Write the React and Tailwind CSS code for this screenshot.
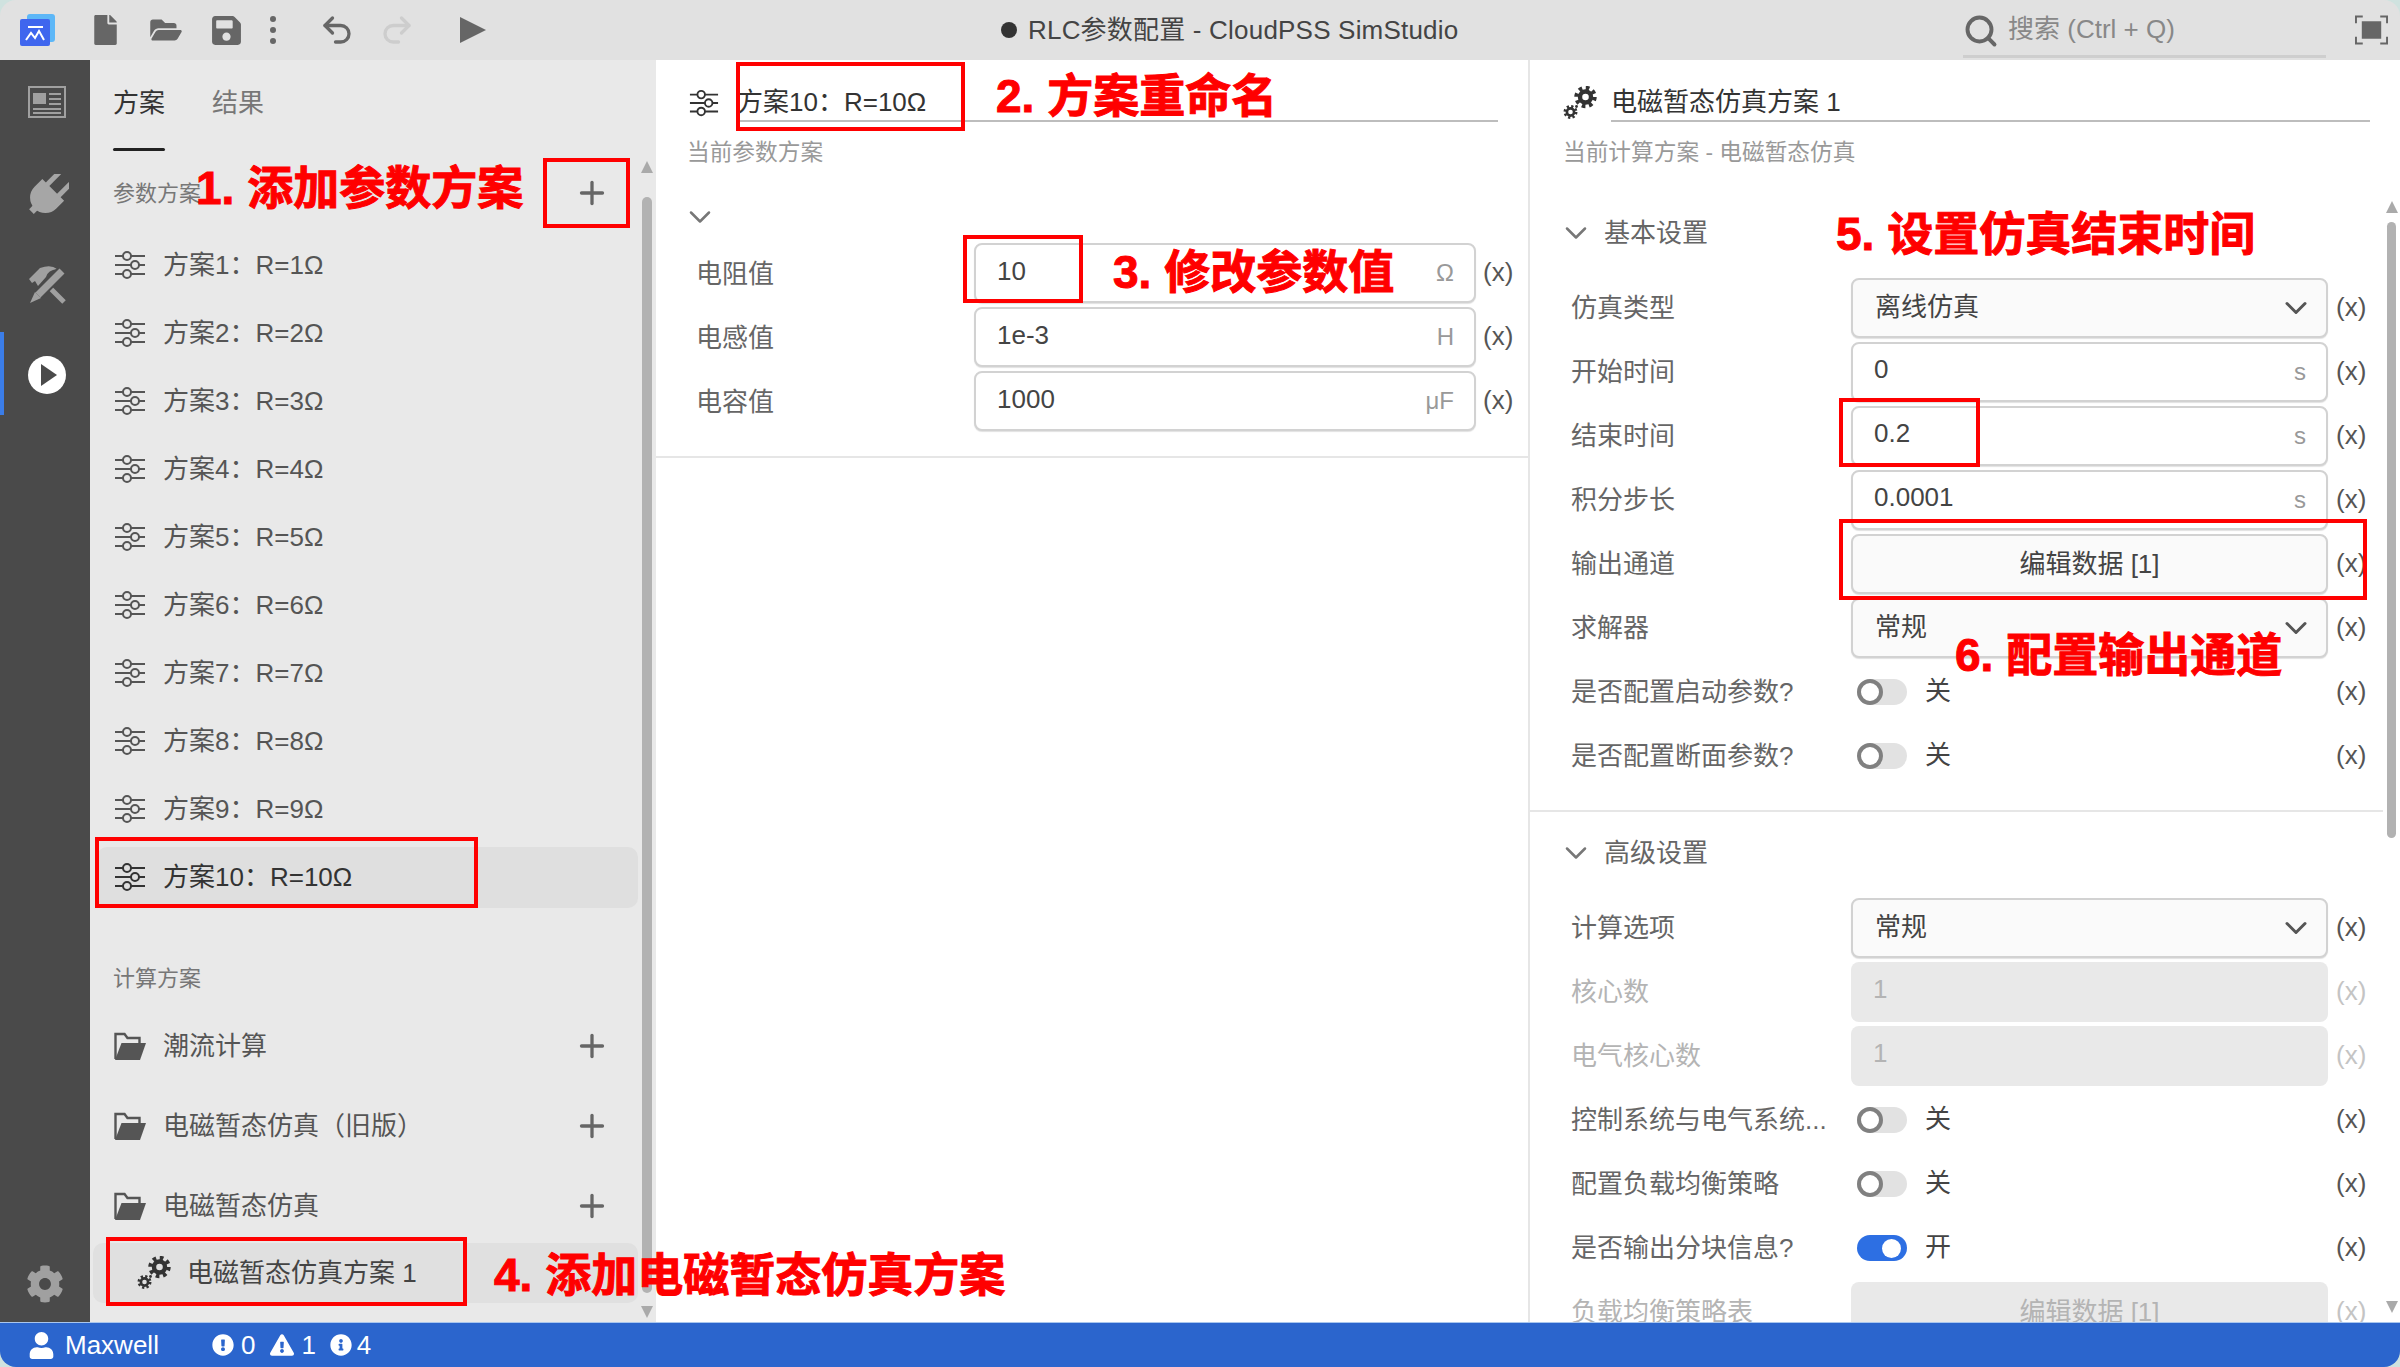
import React from 'react';
import { ChevronDown, Plus, Undo2, Redo2, Search } from 'lucide-react';
import { FaCog, FaUser, FaFile, FaFolderOpen, FaSave, FaExclamationCircle, FaExclamationTriangle, FaInfoCircle } from 'react-icons/fa';

// ── Icons ─────────────────────────────────────────────────────────────────────
const Sliders = ({ className = 'w-[32px] h-[28px] text-[#555]' }) => (
    <svg viewBox="0 0 32 28" className={className} fill="none" stroke="currentColor" strokeWidth="2">
        <path d="M1 5H9M17 5H31" />
        <circle cx="13" cy="5" r="4" />
        <path d="M1 14H17M25 14H31" />
        <circle cx="21" cy="14" r="4" />
        <path d="M1 23H9M17 23H31" />
        <circle cx="13" cy="23" r="4" />
    </svg>
);

const Gear = ({ cx, cy, r, w }) => (
    <g fill="none" stroke="currentColor">
        <circle cx={cx} cy={cy} r={r} strokeWidth={w} />
        <circle cx={cx} cy={cy} r={r + w * 0.8} strokeWidth={w} strokeDasharray={`${(2 * Math.PI * (r + w * 0.8)) / 16} ${(2 * Math.PI * (r + w * 0.8)) / 16}`} />
    </g>
);

const Gears = ({ className = 'w-[34px] h-[34px] text-[#333]' }) => (
    <svg viewBox="0 0 34 34" className={className}>
        <Gear cx={22.5} cy={11} r={5.5} w={4.4} />
        <Gear cx={7.5} cy={26} r={3.6} w={2.6} />
        <circle cx="13.5" cy="20.5" r="1.4" fill="currentColor" />
    </svg>
);

const FolderIcon = () => (
    <svg viewBox="0 0 32 30" className="w-[32px] h-[30px] text-[#555] shrink-0">
        <path d="M1.5 28V3h9l3 4h12v5" fill="none" stroke="currentColor" strokeWidth="2.4" />
        <path d="M1 29L7.5 12H32L26 29Z" fill="currentColor" />
    </svg>
);

const Logo = () => (
    <svg viewBox="0 0 35 32" className="w-[35px] h-[32px]">
        <rect x="7" y="0" width="28" height="28" rx="3" fill="#5db7f7" />
        <rect x="0" y="5" width="30" height="27" rx="2" fill="#3f66ee" />
        <path d="M8 13H23M6 26L11 19L15 24L19 17L24 26" fill="none" stroke="#fff" strokeWidth="2" />
    </svg>
);

const NewsIcon = () => (
    <svg viewBox="0 0 38 32" className="w-[38px] h-[32px] text-[#a0a0a0]">
        <rect x="1" y="1" width="36" height="30" fill="none" stroke="currentColor" strokeWidth="2" />
        <rect x="5" y="7" width="13" height="11" fill="currentColor" />
        <path d="M21 8H33M21 13H33M21 18H33M5 23H33M5 27H33" stroke="currentColor" strokeWidth="2" />
    </svg>
);

const PlugIcon = () => (
    <svg viewBox="0 0 40 40" className="w-[44px] h-[44px] mt-[5px] text-[#a6a6a6]">
        <g transform="rotate(45 20 20)" fill="currentColor">
            <rect x="10.5" y="-3" width="4.5" height="16" />
            <rect x="25" y="-3" width="4.5" height="16" />
            <path d="M6 12H34V22A14 14 0 0 1 6 22Z" />
            <rect x="17" y="32" width="6" height="8" />
        </g>
    </svg>
);

const ToolsIcon = () => (
    <svg viewBox="0 0 40 40" className="w-[40px] h-[40px] mt-[2px] text-[#a0a0a0]">
        <path d="M19 19L37 37" stroke="currentColor" strokeWidth="5" />
        <path d="M2 14L13 3Q24 -1 30 4Q21 5 19 12L11 21L8 16L5 18Z" fill="currentColor" />
        <path d="M35 6L11 30" stroke="#4a4a4a" strokeWidth="11" />
        <path d="M35 6L11 30" stroke="currentColor" strokeWidth="7" />
        <path d="M8 27L14 33L3 38Z" fill="currentColor" />
    </svg>
);

const PlayCircle = () => (
    <svg viewBox="0 0 38 38" className="w-[38px] h-[38px]">
        <circle cx="19" cy="19" r="19" fill="#fff" />
        <path d="M13 8L29 19L13 30Z" fill="#4a4a4a" />
    </svg>
);

const FullscreenIcon = () => (
    <svg viewBox="0 0 34 30" className="w-[33px] h-[30px] text-[#666]">
        <path d="M1 8V1H8M26 1H33V8M1 22V29H8M26 29H33V22" fill="none" stroke="currentColor" strokeWidth="2" />
        <rect x="7" y="6" width="20" height="18" fill="currentColor" />
    </svg>
);

const Arrow = ({ up, className }) => (
    <svg viewBox="0 0 12 12" className={`absolute w-[14px] h-[12px] text-[#aaa] ${className}`}>
        <path d={up ? 'M6 0L12 12H0Z' : 'M6 12L12 0H0Z'} fill="currentColor" />
    </svg>
);

const AddIcon = () => <Plus className="w-[36px] h-[36px] shrink-0 text-[#666]" strokeWidth={2.2} />;

// ── Left panel ────────────────────────────────────────────────────────────────
const PlanRow = ({ name, selected }) => (
    <div className="h-[68px] flex items-center">
        <div className={`ml-[7px] w-[541px] h-[61px] pl-[17px] flex items-center gap-[17px] rounded-[10px] text-[26px] ${selected ? 'bg-[#dfdfdf] text-[#333]' : 'text-[#555]'}`}>
            <Sliders className={`w-[32px] h-[28px] ${selected ? 'text-[#333]' : 'text-[#555]'}`} />
            <span>{name}</span>
        </div>
    </div>
);

const FolderRow = ({ name }) => (
    <div className="h-[80px] pl-[24px] pr-[46px] flex items-center gap-[17px] text-[26px] text-[#555]">
        <FolderIcon />
        <span className="grow">{name}</span>
        <AddIcon />
    </div>
);

const LeftPanel = () => (
    <div className="w-[566px] shrink-0 bg-[#e9e9e9] relative overflow-hidden">
        <div className="pt-[28px] pl-[23px] flex gap-[47px] text-[26px] leading-[30px]">
            <div className="text-[#333]">
                方案
                <div className="mt-[30px] h-[3px] rounded-full bg-[#222]" />
            </div>
            <div className="text-[#777]">结果</div>
        </div>
        <div className="mt-[27px] pl-[23px] pr-[46px] h-[30px] flex items-center justify-between text-[22px] text-[#777]">
            <span>参数方案</span>
            <AddIcon />
        </div>
        <div className="mt-[23px]">
            {[1, 2, 3, 4, 5, 6, 7, 8, 9].map(n => <PlanRow key={n} name={`方案${n}：R=${n}Ω`} />)}
            <PlanRow name="方案10：R=10Ω" selected />
        </div>
        <div className="mt-[53px] pl-[23px] h-[30px] leading-[30px] text-[22px] text-[#777]">计算方案</div>
        <div className="mt-[12px]">
            <FolderRow name="潮流计算" />
            <FolderRow name="电磁暂态仿真（旧版）" />
            <FolderRow name="电磁暂态仿真" />
        </div>
        <div className="-mt-[3px] ml-[3px] w-[545px] h-[60px] pl-[44px] flex items-center gap-[16px] rounded-[10px] bg-[#e0e0e0] text-[26px] text-[#444]">
            <Gears />
            <span>电磁暂态仿真方案 1</span>
        </div>
        {/* scrollbar */}
        <Arrow up className="left-[550px] top-[101px]" />
        <div className="absolute left-[552px] top-[137px] w-[10px] h-[1096px] rounded-full bg-[#b2b2b2]" />
        <Arrow className="left-[550px] top-[1246px]" />
    </div>
);

// ── Form fields ───────────────────────────────────────────────────────────────
const X = ({ disabled }) => (
    <span className={`block pb-[2px] text-[26px] ${disabled ? 'text-[#c4c4c4]' : 'text-[#555]'}`}>(x)</span>
);

const fieldBase = 'h-[60px] rounded-[8px] flex items-center text-[26px]';

const TextField = ({ value, unit, width, lift = 'pb-[6px]' }) => (
    <div className={`${fieldBase} ${width} border-2 border-[#d2d2d2] bg-white pl-[21px] pr-[20px] justify-between shadow-[0_1px_1px_rgba(0,0,0,0.12)]`}>
        <span className={`text-[#444] ${lift}`}>{value}</span>
        <span className="text-[#999] text-[24px]">{unit}</span>
    </div>
);

const SelectField = ({ value, width }) => (
    <div className={`${fieldBase} ${width} border-2 border-[#d2d2d2] bg-[#fafafa] pl-[22px] pr-[12px] justify-between text-[#444] shadow-[0_1px_1px_rgba(0,0,0,0.12)]`}>
        <span className="pb-[2px]">{value}</span>
        <ChevronDown className="w-[36px] h-[36px] text-[#555]" strokeWidth={2} />
    </div>
);

const ButtonField = ({ value, width, disabled }) => (
    <div className={`${fieldBase} ${width} justify-center ${disabled ? 'bg-[#e9e9e9] text-[#b4b4b4]' : 'border-2 border-[#d2d2d2] bg-[#fafafa] text-[#444] shadow-[0_1px_1px_rgba(0,0,0,0.12)]'}`}>
        {value}
    </div>
);

const DisabledField = ({ value, width }) => (
    <div className={`${fieldBase} ${width} bg-[#e9e9e9] pl-[22px] text-[#b4b4b4]`}>
        <span className="pb-[6px]">{value}</span>
    </div>
);

const Toggle = ({ on, width }) => (
    <div className={`${width} h-[60px] pl-[6px] flex items-center gap-[18px] text-[26px] text-[#444]`}>
        {on ? (
            <div className="w-[50px] h-[26px] rounded-full bg-[#2d6fe3] flex items-center justify-end pr-[6px]">
                <div className="w-[19px] h-[19px] rounded-full bg-white" />
            </div>
        ) : (
            <div className="w-[50px] h-[26px] rounded-full bg-[#e2e2e2]">
                <div className="w-[26px] h-[26px] rounded-full bg-white border-4 border-[#808080]" />
            </div>
        )}
        <span className="pb-[2px]">{on ? '开' : '关'}</span>
    </div>
);

const Row = ({ label, disabled, children }) => (
    <div className="h-[60px] flex items-center pl-[41px]">
        <div className={`w-[280px] text-[26px] ${disabled ? 'text-[#b4b4b4]' : 'text-[#666]'}`}>{label}</div>
        {children}
        <div className="ml-[8px]"><X disabled={disabled} /></div>
    </div>
);

const W = 'w-[477px]';

// ── Middle panel ──────────────────────────────────────────────────────────────
const MiddlePanel = () => (
    <div className="w-[874px] shrink-0 bg-white border-r-2 border-[#e6e6e6]">
        <div className="flex items-center">
            <div className="pl-[33px] pt-[24px] w-[81px]"><Sliders className="w-[30px] h-[28px] text-[#333]" /></div>
            <div className="grow mr-[30px] h-[62px] pt-[24px] flex items-center border-b-2 border-[#bdbdbd] text-[26px] text-[#333]">方案10：R=10Ω</div>
        </div>
        <div className="mt-[15px] pl-[31px] h-[30px] leading-[30px] text-[22.7px] text-[#999]">当前参数方案</div>
        <div className="border-b-2 border-[#e6e6e6] pb-[25px]">
            <ChevronDown className="mt-[32px] ml-[26px] w-[36px] h-[36px] text-[#777]" strokeWidth={1.7} />
            <div className="mt-[8px] flex flex-col gap-[4px]">
                {[['电阻值', '10', 'Ω'], ['电感值', '1e-3', 'H'], ['电容值', '1000', 'μF']].map(([label, value, unit]) => (
                    <div key={label} className="h-[60px] flex items-center pl-[40px]">
                        <div className="w-[278px] pt-[2px] text-[26px] text-[#666]">{label}</div>
                        <TextField value={value} unit={unit} width="w-[502px]" lift="pb-[4px]" />
                        <div className="ml-[7px]"><X /></div>
                    </div>
                ))}
            </div>
        </div>
    </div>
);

// ── Right panel ───────────────────────────────────────────────────────────────
const SectionTitle = ({ title }) => (
    <div className="h-[40px] pl-[28px] flex items-center gap-[10px] text-[26px] text-[#666]">
        <ChevronDown className="w-[36px] h-[36px] text-[#777]" strokeWidth={1.7} />
        <span>{title}</span>
    </div>
);

const RightPanel = () => (
    <div className="grow bg-white relative overflow-hidden">
        <div className="flex items-center">
            <div className="pl-[33px] pt-[24px] w-[81px]"><Gears className="w-[34px] h-[34px] text-[#333]" /></div>
            <div className="grow mr-[30px] h-[62px] pt-[24px] flex items-center border-b-2 border-[#bdbdbd] text-[26px] text-[#333]">电磁暂态仿真方案 1</div>
        </div>
        <div className="mt-[15px] pl-[33px] h-[30px] leading-[30px] text-[22.7px] text-[#999]">当前计算方案 - 电磁暂态仿真</div>

        <div className="mt-[46px] w-[853px] border-b-2 border-[#e6e6e6] pb-[24px]">
            <SectionTitle title="基本设置" />
            <div className="mt-[25px] flex flex-col gap-[4px]">
                <Row label="仿真类型"><SelectField value="离线仿真" width={W} /></Row>
                <Row label="开始时间"><TextField value="0" unit="s" width={W} /></Row>
                <Row label="结束时间"><TextField value="0.2" unit="s" width={W} /></Row>
                <Row label="积分步长"><TextField value="0.0001" unit="s" width={W} /></Row>
                <Row label="输出通道"><ButtonField value="编辑数据 [1]" width={W} /></Row>
                <Row label="求解器"><SelectField value="常规" width={W} /></Row>
                <Row label="是否配置启动参数?"><Toggle width={W} /></Row>
                <Row label="是否配置断面参数?"><Toggle width={W} /></Row>
            </div>
        </div>

        <div className="mt-[21px]">
            <SectionTitle title="高级设置" />
            <div className="mt-[25px] flex flex-col gap-[4px]">
                <Row label="计算选项"><SelectField value="常规" width={W} /></Row>
                <Row label="核心数" disabled><DisabledField value="1" width={W} /></Row>
                <Row label="电气核心数" disabled><DisabledField value="1" width={W} /></Row>
                <Row label="控制系统与电气系统..."><Toggle width={W} /></Row>
                <Row label="配置负载均衡策略"><Toggle width={W} /></Row>
                <Row label="是否输出分块信息?"><Toggle on width={W} /></Row>
                <Row label="负载均衡策略表" disabled><ButtonField value="编辑数据 [1]" width={W} disabled /></Row>
            </div>
        </div>

        {/* scrollbar */}
        <Arrow up className="left-[855px] top-[141px]" />
        <div className="absolute left-[857px] top-[162px] w-[9px] h-[616px] rounded-full bg-[#b2b2b2]" />
        <Arrow className="left-[855px] top-[1241px]" />
    </div>
);

// ── Tutorial marks drawn over the screenshot ──────────────────────────────────
const RedBox = ({ className }) => <div className={`absolute border-4 border-[#f00] ${className}`} />;
const Note = ({ className, children }) => (
    <div className={`absolute h-[50px] leading-[50px] text-[46px] font-bold text-[#f00] [-webkit-text-stroke:1px_#f00] whitespace-nowrap ${className}`}>{children}</div>
);

const Marks = () => (
    <>
        <RedBox className="left-[543px] top-[158px] w-[87px] h-[70px]" />
        <RedBox className="left-[95px] top-[837px] w-[383px] h-[71px]" />
        <RedBox className="left-[106px] top-[1237px] w-[361px] h-[69px]" />
        <RedBox className="left-[736px] top-[62px] w-[229px] h-[69px]" />
        <RedBox className="left-[963px] top-[235px] w-[120px] h-[68px]" />
        <RedBox className="left-[1839px] top-[398px] w-[141px] h-[69px]" />
        <RedBox className="left-[1839px] top-[519px] w-[528px] h-[81px]" />
        <Note className="left-[196px] top-[163px]">1. 添加参数方案</Note>
        <Note className="left-[996px] top-[71px]">2. 方案重命名</Note>
        <Note className="left-[1113px] top-[247px]">3. 修改参数值</Note>
        <Note className="left-[494px] top-[1250px]">4. 添加电磁暂态仿真方案</Note>
        <Note className="left-[1836px] top-[209px]">5. 设置仿真结束时间</Note>
        <Note className="left-[1955px] top-[630px]">6. 配置输出通道</Note>
    </>
);

const App = () => {
    return (
        <div className="w-[2400px] h-[1367px] bg-[#cfe2df]">
            <div className="relative w-full h-full rounded-[16px] overflow-hidden flex flex-col font-[family-name:'Liberation_Sans','Noto_Sans_CJK_SC',sans-serif]">
                {/* Title bar */}
                <div className="h-[60px] shrink-0 bg-[#e1e1e1] flex items-center">
                    <div className="ml-[20px]"><Logo /></div>
                    <FaFile className="ml-[39px] w-[23px] h-[30px] text-[#666]" />
                    <FaFolderOpen className="ml-[33px] w-[32px] h-[28px] text-[#666]" />
                    <FaSave className="ml-[30px] w-[29px] h-[33px] text-[#666]" />
                    <div className="ml-[29px] w-[8px] flex flex-col gap-[5px]">
                        <div className="w-[6px] h-[6px] rounded-full bg-[#666]" />
                        <div className="w-[6px] h-[6px] rounded-full bg-[#666]" />
                        <div className="w-[6px] h-[6px] rounded-full bg-[#666]" />
                    </div>
                    <Undo2 className="ml-[41px] w-[36px] h-[36px] text-[#666]" strokeWidth={2.2} />
                    <Redo2 className="ml-[24px] w-[36px] h-[36px] text-[#cdcdcd]" strokeWidth={2.2} />
                    <svg viewBox="0 0 26 26" className="ml-[45px] w-[26px] h-[26px] text-[#666]"><path d="M0 0L26 13L0 26Z" fill="currentColor" /></svg>
                    <div className="ml-[515px] w-[16px] h-[16px] rounded-full bg-[#333]" />
                    <div className="ml-[11px] text-[26px] text-[#444] tracking-[0.2px]">RLC参数配置 - CloudPSS SimStudio</div>
                    <div className="ml-auto w-[363px] h-[45px] mt-[10px] flex items-center gap-[9px] border-b-[3px] border-[#cecece] text-[26px] text-[#888]">
                        <Search className="w-[36px] h-[36px] mb-[6px] text-[#666]" strokeWidth={2.6} />
                        <span className="pb-[8px]">搜索 (Ctrl + Q)</span>
                    </div>
                    <div className="ml-[29px] mr-[12px]"><FullscreenIcon /></div>
                </div>

                {/* Workspace */}
                <div className="h-[1262px] flex overflow-hidden">
                    <div className="w-[90px] shrink-0 bg-[#4a4a4a] flex flex-col items-center pl-[4px] pt-[12px] gap-[31px]">
                        <div className="h-[60px] flex items-center"><NewsIcon /></div>
                        <div className="h-[60px] flex items-center"><PlugIcon /></div>
                        <div className="h-[60px] flex items-center"><ToolsIcon /></div>
                        <div className="relative w-full h-[60px] flex items-center justify-center">
                            <div className="absolute -left-[4px] top-[-13px] w-[4px] h-[83px] bg-[#3b7de8]" />
                            <PlayCircle />
                        </div>
                        <div className="mt-auto mb-[8px] mr-[4px] h-[60px] flex items-center"><FaCog className="w-[38px] h-[38px] text-[#a0a0a0]" /></div>
                    </div>
                    <LeftPanel />
                    <MiddlePanel />
                    <RightPanel />
                </div>

                {/* Status bar */}
                <div className="h-[45px] shrink-0 bg-[#2b65cd] border-t border-[#a9c6ee] flex items-center pl-[28px] text-[26px] text-white">
                    <FaUser className="w-[27px] h-[27px]" />
                    <span className="ml-[10px]">Maxwell</span>
                    <FaExclamationCircle className="ml-[53px] w-[22px] h-[22px]" />
                    <span className="ml-[7px]">0</span>
                    <FaExclamationTriangle className="ml-[15px] w-[24px] h-[22px]" />
                    <span className="ml-[7px]">1</span>
                    <FaInfoCircle className="ml-[14px] w-[22px] h-[22px]" />
                    <span className="ml-[5px]">4</span>
                </div>

                <Marks />
            </div>
        </div>
    );
};

export default App;
